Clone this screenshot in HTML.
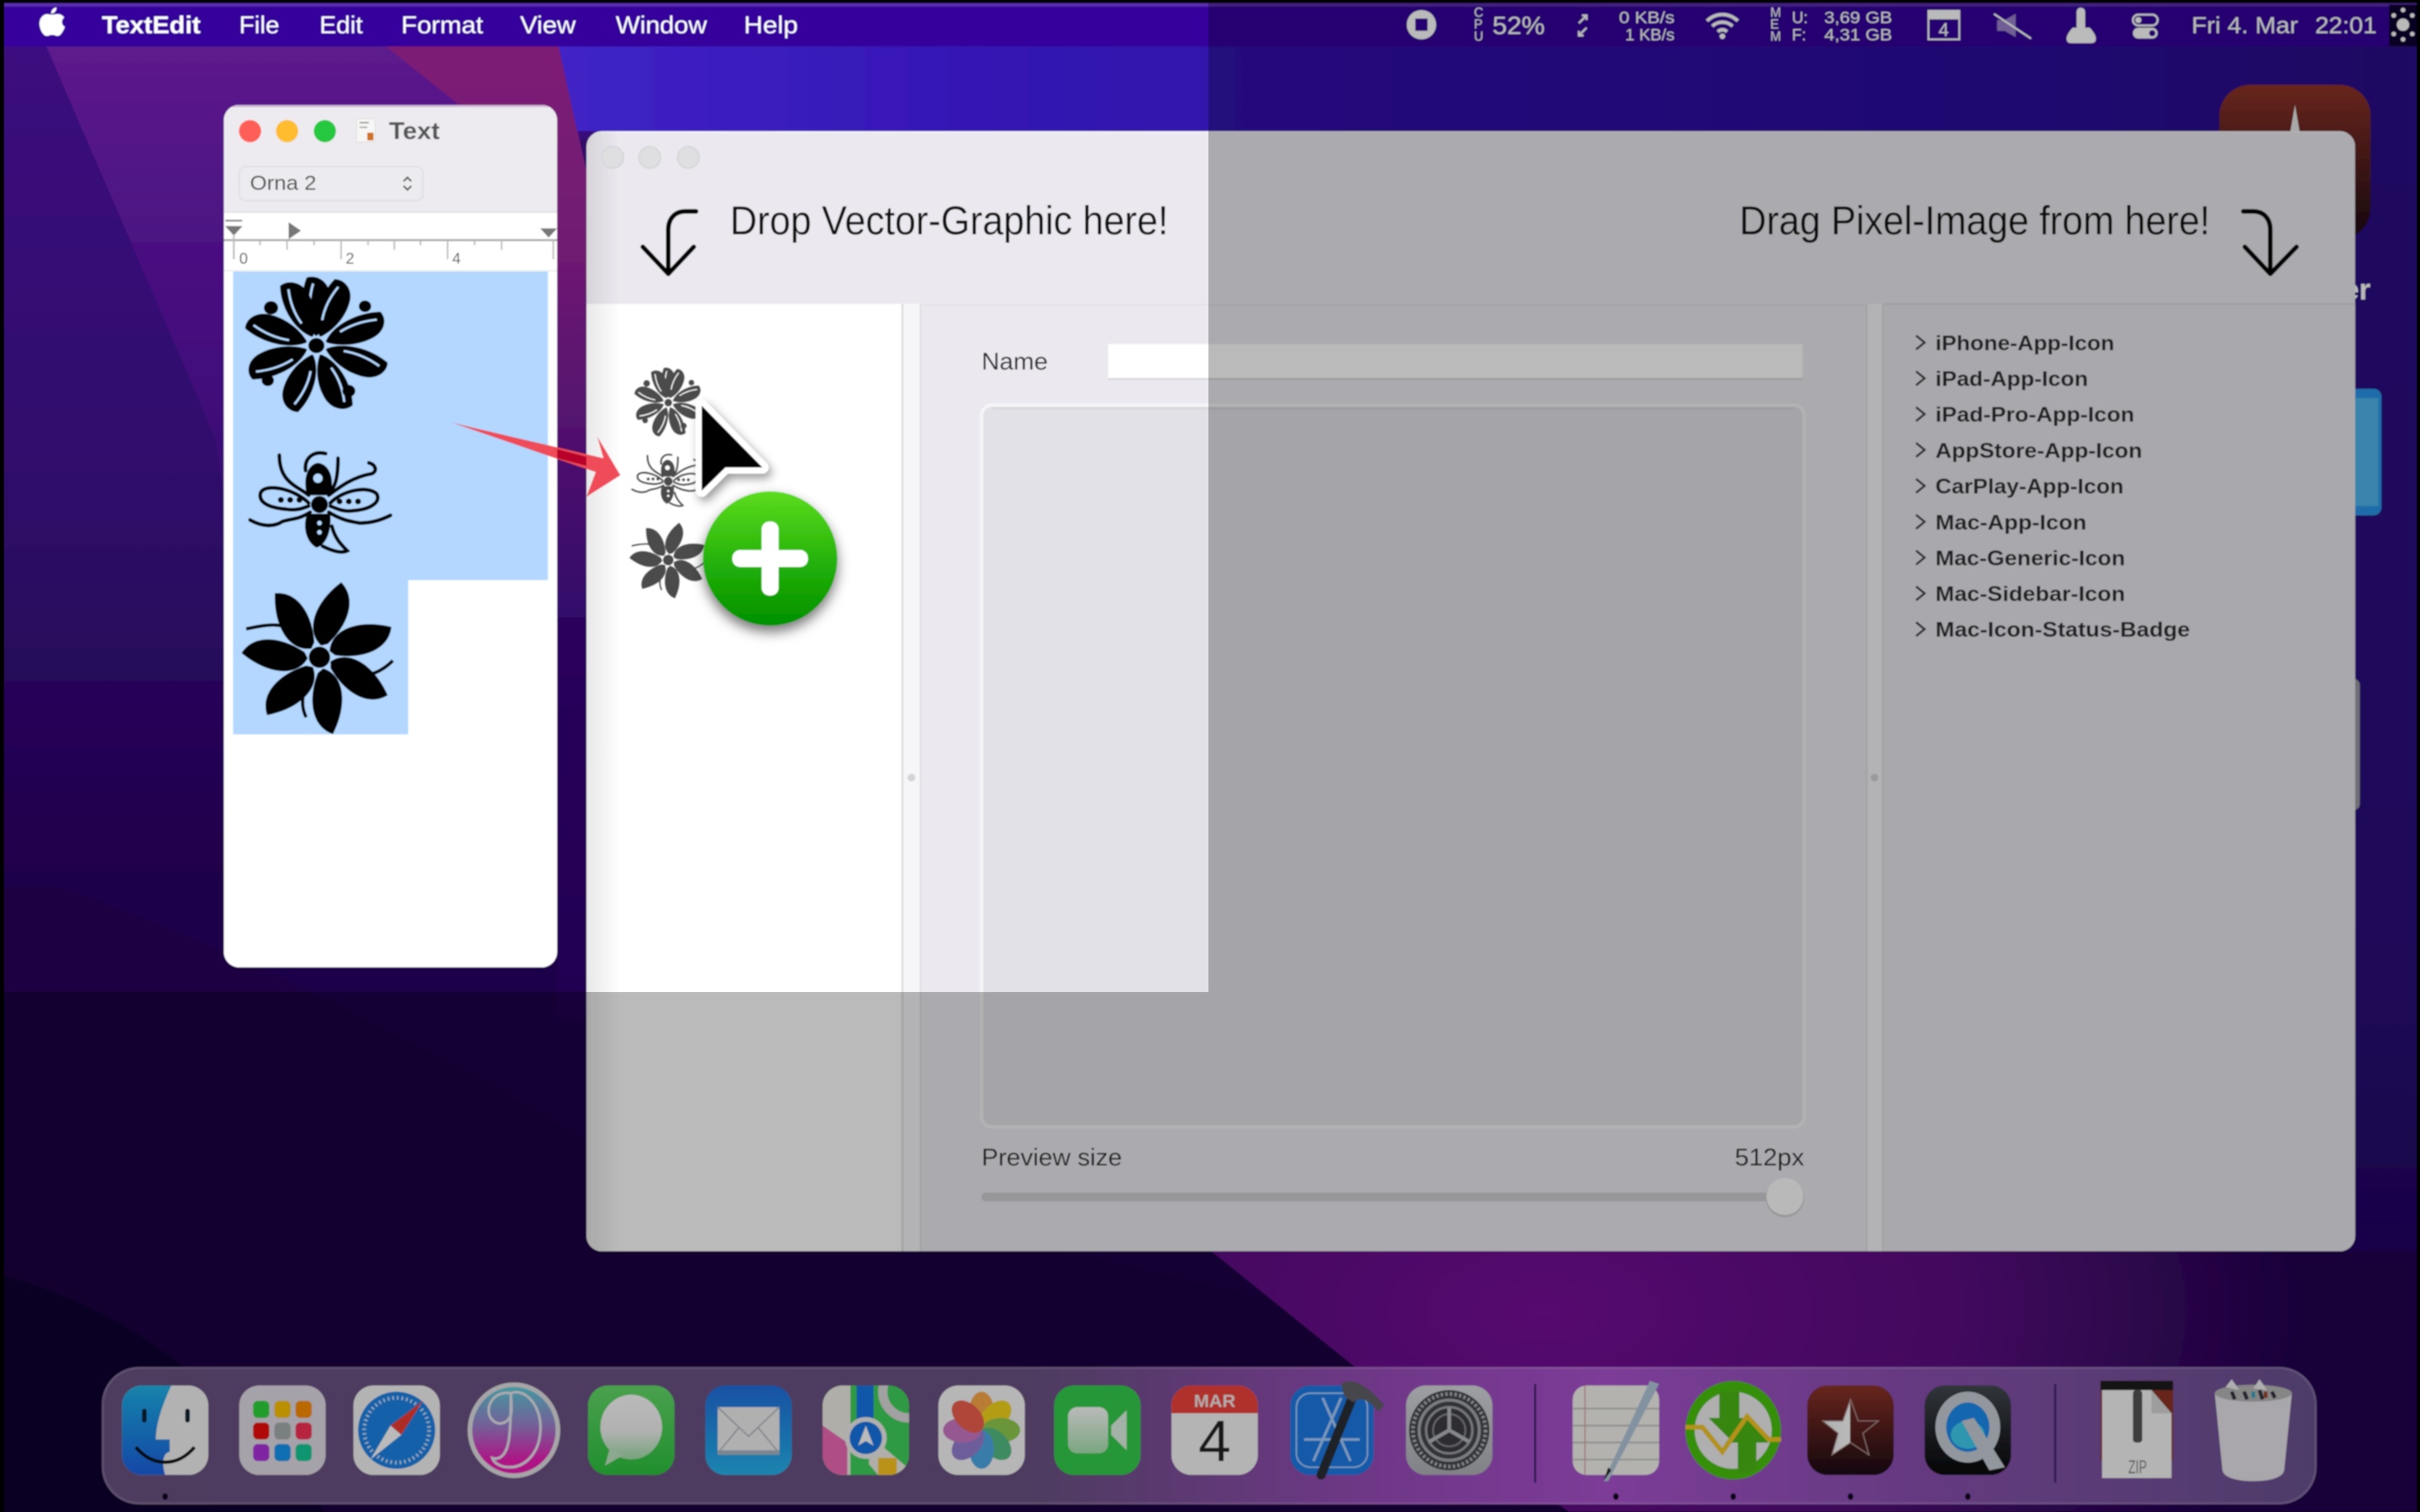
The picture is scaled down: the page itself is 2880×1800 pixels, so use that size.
<!DOCTYPE html>
<html lang="en"><head><meta charset="utf-8"><title>TextEdit and icon tool</title>
<style>
html,body{margin:0;padding:0;background:#000;width:2880px;height:1800px;overflow:hidden}
svg{display:block}
text{font-family:"Liberation Sans",sans-serif}
</style></head><body>
<svg xmlns="http://www.w3.org/2000/svg" width="2880" height="1800" viewBox="0 0 1568 980">
<defs>
<linearGradient id="bgL" x1="0" y1="0" x2="0" y2="1"><stop offset="0" stop-color="#3c0d80"/><stop offset=".3" stop-color="#300a6c"/><stop offset=".58" stop-color="#1f0349"/><stop offset="1" stop-color="#1a0042"/></linearGradient>
<linearGradient id="mid" x1="0" y1="0" x2="0" y2="1"><stop offset="0" stop-color="#5c1a8c"/><stop offset=".5" stop-color="#481080"/><stop offset="1" stop-color="#3a0d74"/></linearGradient>
<linearGradient id="mag" x1="0" y1="0" x2="0" y2="1"><stop offset="0" stop-color="#7d1f75"/><stop offset=".35" stop-color="#701a72"/><stop offset="1" stop-color="#32086a"/></linearGradient>
<linearGradient id="gap" x1="0" y1="0" x2="0" y2="1"><stop offset="0" stop-color="#32086a"/><stop offset="1" stop-color="#220450"/></linearGradient>
<linearGradient id="blue" x1="0" y1="0" x2="1" y2="0"><stop offset="0" stop-color="#3f22c6"/><stop offset=".3" stop-color="#3112ae"/><stop offset=".8" stop-color="#2b0c9a"/><stop offset="1" stop-color="#2a0c84"/></linearGradient>
<linearGradient id="rt" x1="0" y1="0" x2="0" y2="1"><stop offset="0" stop-color="#2a0c84"/><stop offset=".6" stop-color="#2a0a78"/><stop offset="1" stop-color="#1c0050"/></linearGradient>
<radialGradient id="pur" gradientUnits="userSpaceOnUse" cx="1000" cy="850" r="500" gradientTransform="matrix(1 0 0 .55 0 382)"><stop offset="0" stop-color="#760c98"/><stop offset=".55" stop-color="#5a0a80"/><stop offset="1" stop-color="#20044e"/></radialGradient>
<linearGradient id="dock" x1="0" y1="0" x2="1" y2="0"><stop offset="0" stop-color="#6a5282"/><stop offset=".42" stop-color="#6a5284"/><stop offset=".58" stop-color="#9a4cbc"/><stop offset=".68" stop-color="#aa52d0"/><stop offset=".82" stop-color="#8a50b0"/><stop offset="1" stop-color="#6a5290"/></linearGradient>
<linearGradient id="grn" x1="0" y1="0" x2="0" y2="1"><stop offset="0" stop-color="#5cdc1e"/><stop offset=".55" stop-color="#22b008"/><stop offset="1" stop-color="#009000"/></linearGradient>
<linearGradient id="msg" x1="0" y1="0" x2="0" y2="1"><stop offset="0" stop-color="#66dd6c"/><stop offset="1" stop-color="#2cc43e"/></linearGradient>
<linearGradient id="bub" x1="0" y1="0" x2="0" y2="1"><stop offset="0" stop-color="#ffffff"/><stop offset=".55" stop-color="#f4f4f4"/><stop offset="1" stop-color="#a0e0a8"/></linearGradient>
<linearGradient id="ftm" x1="0" y1="0" x2="0" y2="1"><stop offset="0" stop-color="#ffffff"/><stop offset="1" stop-color="#a8e4b0"/></linearGradient>
<linearGradient id="mail" x1="0" y1="0" x2="0" y2="1"><stop offset="0" stop-color="#1f6fe0"/><stop offset="1" stop-color="#26b6f0"/></linearGradient>
<linearGradient id="pen" x1="0" y1="0" x2="0" y2="1"><stop offset="0" stop-color="#5ed0dc"/><stop offset=".45" stop-color="#a082d0"/><stop offset=".85" stop-color="#f01cb8"/></linearGradient>
<linearGradient id="fnd" x1="0" y1="0" x2="0" y2="1"><stop offset="0" stop-color="#20b4ea"/><stop offset="1" stop-color="#1a62e4"/></linearGradient>
<linearGradient id="st" x1="0" y1="0" x2="0" y2="1"><stop offset="0" stop-color="#8e3328"/><stop offset="1" stop-color="#1c0a12"/></linearGradient>
<linearGradient id="qt" x1="0" y1="0" x2="0" y2="1"><stop offset="0" stop-color="#444a52"/><stop offset="1" stop-color="#050608"/></linearGradient>
<linearGradient id="sw" x1="0" y1="0" x2="1" y2="0"><stop offset="0" stop-color="#f0f0f0"/><stop offset=".49" stop-color="#ffffff"/><stop offset=".5" stop-color="#6a2a24" stop-opacity=".25"/><stop offset="1" stop-color="#6a2a24" stop-opacity=".25"/></linearGradient>
<linearGradient id="prf" x1="0" y1="0" x2="0" y2="1"><stop offset="0" stop-color="#d8dadf"/><stop offset="1" stop-color="#b0b2b8"/></linearGradient>
<linearGradient id="shd" x1="0" y1="0" x2="1" y2="0"><stop offset="0" stop-color="#000" stop-opacity=".09"/><stop offset="1" stop-color="#000" stop-opacity="0"/></linearGradient>
<filter id="ds" x="-40%" y="-40%" width="180%" height="180%"><feDropShadow dx="0" dy="4" stdDeviation="4" flood-color="#000" flood-opacity=".55"/></filter>
<filter id="ds2" x="-40%" y="-40%" width="180%" height="180%"><feDropShadow dx="2" dy="3" stdDeviation="3" flood-color="#000" flood-opacity=".4"/></filter>
<filter id="soft" x="0" y="0" width="1568" height="980" filterUnits="userSpaceOnUse"><feGaussianBlur stdDeviation=".4"/></filter>
<clipPath id="win"><rect x="380" y="85" width="1146" height="726" rx="10"/></clipPath>
<clipPath id="tw"><rect x="145" y="68" width="216" height="559" rx="10"/></clipPath>
<clipPath id="ic"><rect x="-28" y="-29" width="56" height="58" rx="13"/></clipPath>

<g id="o1">
 <g id="p1"><path fill="currentColor" d="M0,-6C-9,-14-11-32-6-45C-1-47 6-44 8-36C10-26 7-14 0,-6Z"/><path fill="none" stroke="var(--bg)" stroke-width="1.4" d="M-3,-17C-5,-26-4-34-2-41"/></g>
 <use href="#p1" transform="rotate(22)"/><use href="#p1" transform="rotate(-22)"/><use href="#p1" transform="rotate(68)"/><use href="#p1" transform="rotate(112)"/><use href="#p1" transform="rotate(158)"/><use href="#p1" transform="rotate(202)"/><use href="#p1" transform="rotate(248)"/><use href="#p1" transform="rotate(292)"/>
 <use href="#p1" transform="rotate(22)" style="display:none"/>
 <circle r="6.5" fill="var(--bg)"/><circle r="5" fill="currentColor"/>
 <circle cx="-28" cy="-25" r="4.4" fill="currentColor"/><circle cx="30" cy="-26" r="3.8" fill="currentColor"/><circle cx="-30" cy="23" r="3.8" fill="currentColor"/><circle cx="20" cy="30" r="4" fill="currentColor"/>
</g>
<g id="o2">
 <circle r="5.5" fill="currentColor"/>
 <g fill="none" stroke="currentColor" stroke-width="2.4" stroke-linecap="round">
  <path d="M-6,5C-14,10-18,9-24,11C-30,15-38,14-45,10"/>
  <path d="M6,5C14,10 20,11 26,12C34,12 40,10 46,7"/>
  <path d="M-7,-6C-14,-12-26,-14-26,-32"/>
  <path d="M6,-6C14,-12 22,-18 34,-20C38,-22 36,-26 32,-27"/>
  <path d="M8,-10C12,-14 12,-26 12,-30"/>
  <path d="M-7,-1C-16,-10-34,-14-38,-8C-40,-2-34,2-22,3C-16,4-12,3-7,1"/>
  <path d="M7,-1C16,-10 32,-12 37,-7C40,-2 34,3 22,4C16,5 12,3 7,1"/>
  <path d="M-9,-22C-10,-30-4,-35 4,-33"/>
  <path d="M8,14C10,22 14,26 18,30C14,32 8,30 2,27"/>
 </g>
 <path fill="currentColor" d="M-8,-6C-11,-16-8,-26-1,-27C7,-26 10,-16 7,-6ZM-8,6C-11,14-9,24-2,28C5,26 8,16 7,6Z"/>
 <circle cx="-1" cy="-17" r="3" fill="var(--bg)"/>
 <g fill="currentColor"><circle cx="-13" cy="-3" r="1.9"/><circle cx="-19" cy="-3" r="1.9"/><circle cx="-25" cy="-3" r="1.9"/><circle cx="13" cy="-2" r="1.9"/><circle cx="19" cy="-2" r="1.9"/><circle cx="25" cy="-2" r="1.9"/></g>
 <g fill="var(--bg)"><circle cy="12" r="1.5"/><circle cy="18" r="1.5"/></g>
</g>
<g id="o3">
 <g id="p3"><path fill="currentColor" d="M1,-7C-9,-16-3,-33 13,-45C23,-35 17,-19 5,-8Z"/></g>
 <use href="#p3" transform="rotate(51)"/><use href="#p3" transform="rotate(103)"/><use href="#p3" transform="rotate(154)"/><use href="#p3" transform="rotate(206)"/><use href="#p3" transform="rotate(257)"/><use href="#p3" transform="rotate(309)"/>
 <g fill="none" stroke="currentColor" stroke-width="2"><path d="M-8,-11C-20,-22-30,-20-44,-17"/><path d="M9,6C22,14 34,12 44,2"/><path d="M-5,8C-10,20-12,28-8,36"/></g>
 <circle r="6.4" fill="currentColor"/>
</g>
</defs>

<g filter="url(#soft)">
<!-- wallpaper -->
<rect width="1568" height="980" fill="url(#bgL)"/>
<path d="M30,30H362L392,165L392,320H145L140,285Z" fill="url(#mid)"/>
<path d="M361,90H392V660H361Z" fill="url(#gap)"/>
<path d="M250,30H362L392,165V400H361V130L300,70Z" fill="url(#mag)"/>
<path d="M362,30H1568V260H1500V85H374Z" fill="url(#blue)"/>
<path d="M1500,85H1568V980H1500Z" fill="url(#rt)"/>
<path d="M40,575C170,622 280,680 380,740L900,860V980H0V575Z" fill="#1a0042"/>
<path d="M0,826C70,845 130,880 210,980H0Z" fill="#100030"/>
<path d="M785,811H1568V980H1017L878,886Z" fill="url(#pur)"/>

<!-- behind the window -->
<rect x="1438" y="55" width="98" height="100" rx="20" fill="url(#st)"/>
<path d="M1487,68L1494,108H1480Z" fill="#e8e8e8"/>
<text x="1518" y="194" font-size="19" font-weight="700" fill="#fff">er</text>
<rect x="1500" y="252" width="43" height="82" rx="5" fill="#2a95ea"/>
<rect x="1500" y="258" width="41" height="70" fill="#4fb6ec"/>
<rect x="1515" y="440" width="14" height="85" rx="4" fill="#9a98a0"/>

<!-- menu bar -->
<rect width="1568" height="30" fill="#35059b"/>
<rect y="2" width="1568" height="2.2" fill="#5a2fae"/>
<rect width="1568" height="2" fill="#000"/>
<path fill="#fff" d="M33,9.5C35,9.6 37,8.8 38.5,9.2C40,9.6 41,10.5 41.6,11.4C39.8,12.5 39.4,15.8 42,17.4C41,20 39.4,23.2 37.4,23.3C36,23.3 35.5,22.6 33.8,22.6C32.2,22.6 31.6,23.3 30.2,23.3C28,23.3 25.6,18.8 25.6,15.4C25.6,11.4 28.4,9.2 30.4,9.2C31.6,9.2 32.4,9.5 33,9.5ZM33.2,8.8C33,6.8 34.6,5 36.6,4.8C36.8,6.8 35,8.8 33.2,8.8Z"/>
<g fill="#fff" font-size="15.6">
<text x="66" y="21.5" font-weight="700" textLength="64" lengthAdjust="spacingAndGlyphs">TextEdit</text>
<text x="155" y="21.5" textLength="26" lengthAdjust="spacingAndGlyphs">File</text>
<text x="207" y="21.5" textLength="28" lengthAdjust="spacingAndGlyphs">Edit</text>
<text x="260" y="21.5" textLength="53" lengthAdjust="spacingAndGlyphs">Format</text>
<text x="337" y="21.5" textLength="36" lengthAdjust="spacingAndGlyphs">View</text>
<text x="399" y="21.5" textLength="59" lengthAdjust="spacingAndGlyphs">Window</text>
<text x="482" y="21.5" textLength="35" lengthAdjust="spacingAndGlyphs">Help</text>
</g>
<!-- menu status items -->
<g fill="#fff">
<circle cx="921" cy="16" r="9.5"/><rect x="917" y="12" width="8" height="8" fill="#35059b"/>
<g font-size="8.4"><text x="955" y="11">C</text><text x="955" y="18.5">P</text><text x="955" y="26.5">U</text></g>
<text x="967" y="22" font-size="16" textLength="34" lengthAdjust="spacingAndGlyphs">52%</text>
<path d="M1023,15L1028,10M1025,10H1028V13M1028,18L1023,23M1023,20V23H1026" fill="none" stroke="#fff" stroke-width="1.3"/>
<g font-size="10.4"><text x="1049" y="15" textLength="36" lengthAdjust="spacingAndGlyphs">0 KB/s</text><text x="1053" y="26" textLength="32" lengthAdjust="spacingAndGlyphs">1 KB/s</text></g>
<path d="M1106,13.5C1112,8 1120,8 1126,13.5M1109.5,17C1113,13.5 1119,13.5 1122.5,17M1113,20.5C1115,18.8 1117,18.8 1119,20.5" fill="none" stroke="#fff" stroke-width="2.2"/><circle cx="1116" cy="23.5" r="1.8"/>
<g font-size="8.4"><text x="1147" y="11">M</text><text x="1147" y="18.5">E</text><text x="1147" y="26.5">M</text></g>
<g font-size="10.4"><text x="1161" y="15">U:</text><text x="1161" y="26">F:</text><text x="1182" y="15" textLength="44" lengthAdjust="spacingAndGlyphs">3,69 GB</text><text x="1182" y="26" textLength="44" lengthAdjust="spacingAndGlyphs">4,31 GB</text></g>
<rect x="1249.5" y="7" width="20" height="18.5" fill="none" stroke="#fff" stroke-width="1.2"/><rect x="1249.5" y="7" width="20" height="5.5"/><text x="1256" y="23.5" font-size="12">4</text>
<path d="M1294,13H1299L1306,9V24L1299,20H1294Z" opacity=".5"/><path d="M1292,9L1316,25" stroke="#fff" stroke-width="1.2"/>
<rect x="1345.5" y="5" width="5.5" height="16" rx="2.7"/><path d="M1343,18C1341,20 1339,23 1339,25C1339,27 1340,28 1342,28H1355C1357,28 1358,27 1358,25C1358,23 1356,20 1354,18Z"/>
<rect x="1382" y="9.5" width="16" height="7" rx="3.5" fill="none" stroke="#fff" stroke-width="1.3"/><rect x="1382" y="18" width="16" height="7" rx="3.5"/><circle cx="1385.5" cy="13" r="2"/><circle cx="1394.5" cy="21.5" r="2" fill="#35059b"/>
<text x="1420" y="21.5" font-size="15" textLength="69" lengthAdjust="spacingAndGlyphs">Fri 4. Mar</text>
<text x="1500" y="21.5" font-size="15" textLength="40" lengthAdjust="spacingAndGlyphs">22:01</text>
</g>
<rect x="1548" y="3" width="20" height="27" fill="#0a0030"/>
<g fill="#fff"><circle cx="1557" cy="16" r="4"/><circle cx="1557" cy="6.5" r="1.5"/><circle cx="1557" cy="25.5" r="1.5"/><circle cx="1551" cy="10" r="1.5"/><circle cx="1563" cy="10" r="1.5"/><circle cx="1551" cy="22" r="1.5"/><circle cx="1563" cy="22" r="1.5"/></g>

<!-- dock -->
<rect x="66" y="886" width="1435" height="89" rx="24" fill="url(#dock)"/>
<rect x="66.6" y="886.6" width="1433.8" height="87.8" rx="24" fill="none" stroke="#fff" stroke-opacity=".16" stroke-width="1.4"/>
<rect x="994" y="897" width="1.3" height="64" fill="#3e1a6a"/><rect x="1331" y="897" width="1.3" height="64" fill="#3e1a6a"/>
<g fill="#080020"><ellipse cx="107" cy="970" rx="1.8" ry="2.2"/><ellipse cx="1047" cy="970" rx="1.8" ry="2.2"/><ellipse cx="1123" cy="970" rx="1.8" ry="2.2"/><ellipse cx="1199" cy="970" rx="1.8" ry="2.2"/><ellipse cx="1275" cy="970" rx="1.8" ry="2.2"/></g>

<!-- Finder -->
<g transform="translate(107,927)"><g clip-path="url(#ic)"><rect x="-28" y="-29" width="56" height="58" fill="#f4f4f6"/><path d="M-28,-29H4C-2,-16-6,-4-6,6H3V14C-2,15-2,22-0,29H-28Z" fill="url(#fnd)"/></g><rect x="-15" y="-14" width="3" height="9" rx="1.5" fill="#123"/><rect x="13" y="-14" width="3" height="9" rx="1.5" fill="#123"/><path d="M-19,11C-8,24 8,24 19,11" fill="none" stroke="#111" stroke-width="2.2"/></g>
<!-- Launchpad -->
<g transform="translate(183,927)"><rect x="-28" y="-29" width="56" height="58" rx="13" fill="#e2dee8"/>
<rect x="-19" y="-19" width="10.5" height="11" rx="3" fill="#2ed83c"/><rect x="-5.2" y="-19" width="10.5" height="11" rx="3" fill="#ffc400"/><rect x="8.5" y="-19" width="10.5" height="11" rx="3" fill="#ff9000"/>
<rect x="-19" y="-5" width="10.5" height="11" rx="3" fill="#f00808"/><rect x="-5.2" y="-5" width="10.5" height="11" rx="3" fill="#a8b0b0"/><rect x="8.5" y="-5" width="10.5" height="11" rx="3" fill="#fa3058"/>
<rect x="-19" y="9" width="10.5" height="11" rx="3" fill="#b030e0"/><rect x="-5.2" y="9" width="10.5" height="11" rx="3" fill="#1298f4"/><rect x="8.5" y="9" width="10.5" height="11" rx="3" fill="#18cc9c"/></g>
<!-- Safari -->
<g transform="translate(257,927)"><rect x="-28" y="-29" width="56" height="58" rx="13" fill="#f6f6f6"/><circle r="25" fill="#1e86e8"/><circle r="21" fill="none" stroke="#cfe6ff" stroke-width="2.4" stroke-dasharray="1 2"/><path d="M17,-19L3,3L-4,-3Z" fill="#f03c30"/><path d="M-17,19L3,3L-4,-3Z" fill="#fff"/></g>
<!-- Pen app -->
<g transform="translate(333,927)"><ellipse rx="30" ry="31" fill="#e2e2e6"/><ellipse rx="27" ry="28" fill="url(#pen)"/><path d="M-2,-24C-14,-26-19,-14-15,-8C-11,-2-4,-4-2,-10C-1,-14-2,-20-2,-24C8,-28 19,-14 17,2C16,14 8,24-3,24C-9,24-13,21-14,18C-8,20-4,14-3,4C-2,-6-2,-14-2,-24" fill="none" stroke="#e8e8f0" stroke-width="1.7"/></g>
<!-- Messages -->
<g transform="translate(409,927)"><rect x="-28" y="-29" width="56" height="58" rx="13" fill="url(#msg)"/><ellipse cy="-2" rx="20" ry="21" fill="url(#bub)"/><path d="M-14,12L-17,23L-5,16Z" fill="#c0e8c4"/></g>
<!-- Mail -->
<g transform="translate(485,927)"><rect x="-28" y="-29" width="56" height="58" rx="13" fill="url(#mail)"/><rect x="-20" y="-15" width="40" height="30" rx="2" fill="#f2f2f2"/><path d="M-20,-15L0,4L20,-15M-20,15L-6,-2M20,15L6,-2" fill="none" stroke="#b8bcc6" stroke-width="1"/><rect x="-20" y="13" width="40" height="3" fill="#a8b8c8"/></g>
<!-- Maps -->
<g transform="translate(561,927)"><g clip-path="url(#ic)"><rect x="-28" y="-29" width="56" height="58" fill="#3fd45c"/><path d="M-28,-29H-10V29H-28Z" fill="#f0efe6"/><path d="M-28,-3L-12,8V29H-28Z" fill="#f06ab8"/><path d="M-6,-29H5V0H-6Z" fill="#1778e8"/><path d="M2,3L28,25V29H8L2,22Z" fill="#f0efe6"/><path d="M8,18H20V29H8Z" fill="#ffc820"/><circle cx="28" cy="-25" r="17" fill="none" stroke="#ddd" stroke-width="6"/></g><circle cx="0" cy="5" r="13.5" fill="#f0f0f0"/><circle cx="0" cy="5" r="10.5" fill="#1778e8"/><path d="M0,-3L5,10L0,7L-5,10Z" fill="#fff"/></g>
<!-- Photos -->
<g transform="translate(636,927)"><rect x="-28" y="-29" width="56" height="58" rx="13" fill="#fafafa"/>
<g opacity=".88"><ellipse cy="-12.5" rx="8" ry="12.5" fill="#ffa030"/><ellipse cy="-12.5" rx="8" ry="12.5" fill="#f4d400" transform="rotate(45)"/><ellipse cy="-12.5" rx="8" ry="12.5" fill="#84c838" transform="rotate(90)"/><ellipse cy="-12.5" rx="8" ry="12.5" fill="#40b878" transform="rotate(135)"/><ellipse cy="-12.5" rx="8" ry="12.5" fill="#38a0e8" transform="rotate(180)"/><ellipse cy="-12.5" rx="8" ry="12.5" fill="#8a70d0" transform="rotate(225)"/><ellipse cy="-12.5" rx="8" ry="12.5" fill="#c868c0" transform="rotate(270)"/><ellipse cy="-12.5" rx="8" ry="12.5" fill="#f04a38" transform="rotate(315)"/></g></g>
<!-- FaceTime -->
<g transform="translate(711,927)"><rect x="-28" y="-29" width="56" height="58" rx="13" fill="#34cf4e"/><rect x="-19" y="-15" width="26" height="30" rx="6" fill="url(#ftm)"/><path d="M9,-3L19,-13V13L9,3Z" fill="#e0f4e4"/></g>
<!-- Calendar -->
<g transform="translate(787,927)"><g clip-path="url(#ic)"><rect x="-28" y="-29" width="56" height="58" fill="#f7f7f7"/><rect x="-28" y="-29" width="56" height="18" fill="#f2433a"/></g><text x="0" y="-15" font-size="11.5" font-weight="700" fill="#f6e8e8" text-anchor="middle" textLength="27" lengthAdjust="spacingAndGlyphs">MAR</text><text x="0" y="20" font-size="38" fill="#222" text-anchor="middle">4</text></g>
<!-- Xcode -->
<g transform="translate(863,927)"><rect x="-27" y="-29" width="54" height="58" rx="13" fill="#1e7ce8"/><rect x="-23" y="-24" width="46" height="48" rx="9" fill="none" stroke="#a8d0ff" stroke-width="1"/><path d="M-6,-21L12,20M6,-21L-12,20M-18,6H18" fill="none" stroke="#a8d0ff" stroke-width="1.7"/><path d="M-7,29L14,-23" stroke="#2a2e36" stroke-width="6" stroke-linecap="round"/><path d="M6,-30C14,-36 26,-26 34,-16L30,-12C24,-20 18,-22 14,-18L8,-22Z" fill="#606068"/></g>
<!-- Preferences -->
<g transform="translate(939,927)"><rect x="-28" y="-29" width="56" height="58" rx="13" fill="url(#prf)"/><circle r="26" fill="#44464c"/><circle r="23.5" fill="none" stroke="#b0b2b8" stroke-width="2.4" stroke-dasharray="1.5 1.5"/><circle r="19.5" fill="none" stroke="#a8aab0" stroke-width="2"/><circle r="16" fill="#3c3e44"/><circle r="15" fill="none" stroke="#a0a2a8" stroke-width="1.6"/><circle r="10.5" fill="none" stroke="#888a90" stroke-width="1.2"/><path d="M0,0L0,-15M0,0L13,7.5M0,0L-13,7.5" stroke="#b8bac0" stroke-width="2.4"/></g>
<!-- TextEdit -->
<g transform="translate(1047,927)"><rect x="-28" y="-29" width="56" height="58" rx="9" fill="#f6f5f0"/><path d="M-28,-14H28M-28,-3H28M-28,8H28M-28,19H28" stroke="#c8c8c8" stroke-width="1.2"/><path d="M-20,-29V29" stroke="#e0a0a0" stroke-width=".8"/><path d="M-8,33L22,-32L28,-30L-5,33Z" fill="#b4c8dc"/><path d="M-8,33L-5,24L-3,26Z" fill="#222"/></g>
<!-- Green -->
<g transform="translate(1123,927)"><circle r="31" fill="#4cc40c" transform="scale(1,1.03)"/><circle r="25" fill="#f0f0f0"/><path d="M-9,-25H4V-8H12L-2,6L-16,-8H-9Z" fill="#4cb818"/><path d="M3,28V8H-5L9,-8L23,8H15V26Z" fill="#4cb818"/><path d="M-31,-2H-20L-7,14L9,-9L23,6H31" fill="none" stroke="#f4c820" stroke-width="3"/></g>
<!-- Star app -->
<g transform="translate(1199,927)"><rect x="-28" y="-29" width="56" height="58" rx="13" fill="url(#st)"/><path d="M0,-20L5,-6H18L8,2L12,16L0,8L-12,16L-8,2L-18,-6H-5Z" fill="url(#sw)" stroke="#b09090" stroke-width=".7"/></g>
<!-- QuickTime -->
<g transform="translate(1275,927)"><rect x="-28" y="-29" width="56" height="58" rx="13" fill="url(#qt)"/><ellipse cy="-2" rx="21" ry="23" fill="#c8d0d8"/><ellipse cy="-2" rx="14" ry="16" fill="#1e8cf0"/><ellipse cy="3" rx="11" ry="9" fill="#40d0f0"/><path d="M-4,-6L4,-8L24,24L14,26Z" fill="#c8d0d8"/></g>
<!-- ZIP -->
<g transform="translate(1385,927)"><rect x="-24" y="-32" width="47" height="52" fill="#8e3328"/><rect x="-24" y="-32" width="47" height="6" fill="#1a1a1a"/><path d="M-23,-26H9L22,-11V31H-23Z" fill="#f7f7f7"/><path d="M9,-26L22,-11H9Z" fill="#d8d8d8"/><rect x="-3" y="-26" width="6" height="34" rx="2" fill="#555"/><text x="0" y="28" font-size="12" fill="#777" text-anchor="middle" textLength="12" lengthAdjust="spacingAndGlyphs">ZIP</text></g>
<!-- Trash -->
<g transform="translate(1460,927)"><path d="M-25,-24L-20,26C-19,31-10,33 0,33C10,33 19,31 20,26L25,-24Z" fill="#f2f2f2" opacity=".92"/><ellipse cy="-24" rx="25" ry="5.5" fill="#b8b8b8"/><path d="M-18,-28L-14,-33L-9,-26ZM0,-27L4,-33L9,-26Z" fill="#f0f0f0"/><path d="M-14,-25L-12,-20M-6,-25L-4,-20M4,-26L6,-20M12,-25L14,-21" stroke-width="2.4" stroke="#334"/><path d="M0,-25L0,-21" stroke="#30a8c0" stroke-width="2.4"/><path d="M8,-25L8,-21" stroke="#a04020" stroke-width="2.4"/></g>

<!-- TextEdit window -->
<g clip-path="url(#tw)">
<rect x="145" y="68" width="216" height="559" fill="#fff"/>
<rect x="145" y="68" width="216" height="70" fill="#edebf0"/>
<rect x="145" y="68" width="216" height="1.4" fill="#cdb6d6"/>
<rect x="145" y="137" width="216" height="1" fill="#e2e2e4"/>
<circle cx="162" cy="85" r="7.2" fill="#ff5f57"/><circle cx="186" cy="85" r="7.2" fill="#febc2e"/><circle cx="210.5" cy="85" r="7.2" fill="#28c840"/>
<rect x="231" y="77" width="12" height="15" fill="#f7f7f5" stroke="#ddd" stroke-width=".5"/><rect x="233" y="79" width="6" height="1" fill="#999"/><rect x="233" y="82" width="5" height="1" fill="#aaa"/><rect x="238" y="86" width="4" height="5" fill="#d07020"/>
<text x="252" y="90" font-size="15.5" font-weight="700" fill="#555" textLength="33" lengthAdjust="spacingAndGlyphs">Text</text>
<rect x="155" y="108" width="119" height="22" rx="4" fill="#ececf0" stroke="#dfdfe3" stroke-width="1"/>
<text x="162" y="123" font-size="13" fill="#4a4a4a" textLength="43" lengthAdjust="spacingAndGlyphs">Orna 2</text>
<path d="M261.5,117.5L264,115L266.5,117.5M261.5,120.5L264,123L266.5,120.5" fill="none" stroke="#555" stroke-width="1.1"/>
<rect x="145" y="155" width="216" height="1.3" fill="#aaa"/>
<path d="M146,143H157M147,147H156L151.5,152Z" fill="#777" stroke="#777" stroke-width="1"/><path d="M151.5,152V168" stroke="#bbb"/>
<path d="M187,144L195,149.5L187,155Z" fill="#777"/><path d="M350,148H361L355.5,154Z" fill="#777"/>
<path d="M151.5,156V168M186,156V162M221,156V168M255.5,156V162M290,156V168M325,156V162M358.5,156V168M168.5,156V159M203.5,156V159M238.5,156V159M272.5,156V159M307.5,156V159" stroke="#bbb" stroke-width="1"/>
<g font-size="10" fill="#555"><text x="155" y="171">0</text><text x="224" y="171">2</text><text x="293" y="171">4</text></g>
<rect x="145" y="175" width="216" height="1" fill="#eee"/>
<path d="M151,176H355V376H264.5V476H151Z" fill="#b3d7ff"/>
</g>
<g style="color:#000;--bg:#b3d7ff">
<use href="#o1" transform="translate(205,224) scale(1.05,.98)"/>
<use href="#o2" transform="translate(207,327)"/>
<use href="#o3" transform="translate(207,426) scale(1.08)"/>
</g>

<!-- main window -->
<g clip-path="url(#win)">
<rect x="380" y="85" width="1146" height="726" fill="#ebe9ef"/>
<rect x="380" y="85" width="1146" height="1.2" fill="#f4f3f6"/>
<rect x="380" y="197" width="205" height="614" fill="#fff"/>
<rect x="1220" y="197" width="306" height="614" fill="#e8e6ec"/>
<rect x="597" y="197" width="613" height="1" fill="#e4e2e8"/>
<rect x="1220" y="196.4" width="306" height="1.2" fill="#dcdae0"/>
<rect x="584" y="197" width="1.4" height="614" fill="#dedee0"/>
<rect x="585.4" y="197" width="10.6" height="614" fill="#f6f6f8"/>
<rect x="596" y="197" width="1" height="614" fill="#dedee2"/>
<rect x="1209" y="197" width="1" height="614" fill="#dedee2"/>
<rect x="1210" y="197" width="9.5" height="614" fill="#f6f6f8"/>
<rect x="1219.5" y="197" width="1" height="614" fill="#dedee2"/>
<circle cx="590.6" cy="504" r="2.5" fill="#d4d4d6"/><circle cx="1214.6" cy="504" r="2.5" fill="#d4d4d6"/>
<rect x="380" y="85" width="22" height="726" fill="url(#shd)"/>
<circle cx="397" cy="102" r="7" fill="#dfdfe2" stroke="#d6d6d9"/><circle cx="421" cy="102" r="7" fill="#dfdfe2" stroke="#d6d6d9"/><circle cx="446" cy="102" r="7" fill="#dfdfe2" stroke="#d6d6d9"/>
<text x="473" y="152" font-size="26" fill="#111" textLength="284" lengthAdjust="spacingAndGlyphs">Drop Vector-Graphic here!</text>
<text x="1127" y="152" font-size="26" fill="#111" textLength="305" lengthAdjust="spacingAndGlyphs">Drag Pixel-Image from here!</text>
<path d="M451,137H444C437,137 433,142 433,149V177M416.5,160L433,177.5L449.5,160" fill="none" stroke="#000" stroke-width="3" stroke-linecap="round" stroke-linejoin="round"/>
<path d="M1453.5,137H1460C1467,137 1471,142 1471,149V177M1454.5,160L1471,177.5L1488,160" fill="none" stroke="#000" stroke-width="3" stroke-linecap="round" stroke-linejoin="round"/>
<text x="636" y="239.5" font-size="15.5" fill="#222" textLength="43" lengthAdjust="spacingAndGlyphs">Name</text>
<rect x="718" y="223" width="450" height="23" fill="#fff"/><rect x="718" y="245" width="450" height="1.2" fill="#d8d8dc"/>
<rect x="636" y="262.5" width="533" height="468" rx="7" fill="#e2e1e7" stroke="#f5f5f7" stroke-width="2.2"/>
<rect x="643" y="264" width="519" height="1.4" fill="#d8d8dc"/>
<text x="636" y="755.5" font-size="15.5" fill="#222" textLength="91" lengthAdjust="spacingAndGlyphs">Preview size</text>
<text x="1169" y="755.5" font-size="15.5" fill="#222" text-anchor="end" textLength="45" lengthAdjust="spacingAndGlyphs">512px</text>
<rect x="636" y="773" width="532" height="5.6" rx="2.5" fill="#cfcfd3"/>
<circle cx="1156.5" cy="776.5" r="12.5" fill="#d0cfd3"/><circle cx="1156.5" cy="775.5" r="12" fill="#fefefe"/>
<g font-size="13.4" font-weight="700" fill="#2a2a2e">
<text x="1254" y="227" textLength="116" lengthAdjust="spacingAndGlyphs">iPhone-App-Icon</text>
<text x="1254" y="250.2" textLength="99" lengthAdjust="spacingAndGlyphs">iPad-App-Icon</text>
<text x="1254" y="273.4" textLength="129" lengthAdjust="spacingAndGlyphs">iPad-Pro-App-Icon</text>
<text x="1254" y="296.6" textLength="134" lengthAdjust="spacingAndGlyphs">AppStore-App-Icon</text>
<text x="1254" y="319.9" textLength="122" lengthAdjust="spacingAndGlyphs">CarPlay-App-Icon</text>
<text x="1254" y="343.2" textLength="98" lengthAdjust="spacingAndGlyphs">Mac-App-Icon</text>
<text x="1254" y="366.4" textLength="123" lengthAdjust="spacingAndGlyphs">Mac-Generic-Icon</text>
<text x="1254" y="389.6" textLength="123" lengthAdjust="spacingAndGlyphs">Mac-Sidebar-Icon</text>
<text x="1254" y="412.8" textLength="165" lengthAdjust="spacingAndGlyphs">Mac-Icon-Status-Badge</text>
</g>
<g fill="none" stroke="#3a3a3e" stroke-width="1.4">
<path d="M1241.5,217.5L1247,222L1241.5,226.5"/><path d="M1241.5,240.7L1247,245.2L1241.5,249.7"/><path d="M1241.5,263.9L1247,268.4L1241.5,272.9"/><path d="M1241.5,287.1L1247,291.6L1241.5,296.1"/><path d="M1241.5,310.4L1247,314.9L1241.5,319.4"/><path d="M1241.5,333.7L1247,338.2L1241.5,342.7"/><path d="M1241.5,356.9L1247,361.4L1241.5,365.9"/><path d="M1241.5,380.1L1247,384.6L1241.5,389.1"/><path d="M1241.5,403.3L1247,407.8L1241.5,412.3"/>
</g>
</g>

<!-- drag preview -->
<g style="color:#4c4c4c;--bg:#fff">
<use href="#o1" transform="translate(433,261) scale(.5)"/>
<use href="#o2" transform="translate(433,312) scale(.52)"/>
<use href="#o3" transform="translate(433,363) scale(.54)"/>
</g>
<!-- red arrow -->
<path d="M293,274L391,297L387,283L402,308L380,322L386,306Z" fill="#f04c58"/>
<path d="M361,291L380,296L380,302L361,297Z" fill="#b8062a"/>
<!-- cursor -->
<path d="M454.7,263L494,303H470L454.7,318Z" fill="#000" stroke="#fff" stroke-width="8" stroke-linejoin="round" paint-order="stroke" filter="url(#ds2)"/>
<!-- plus badge -->
<circle cx="499" cy="362" r="43.5" fill="url(#grn)" filter="url(#ds)"/>
<rect x="474.5" y="356.5" width="49" height="11" rx="5" fill="#fff"/><rect x="493.5" y="338" width="11" height="48" rx="5" fill="#fff"/>
</g>

<!-- spotlight dim -->
<path d="M783,0H1568V980H0V643H783Z" fill="#000" fill-opacity=".27"/>
<!-- screen bezel -->
<rect width="2.6" height="980" fill="#000"/><rect x="1566" width="2" height="980" fill="#000"/>
</svg>
</body></html>
